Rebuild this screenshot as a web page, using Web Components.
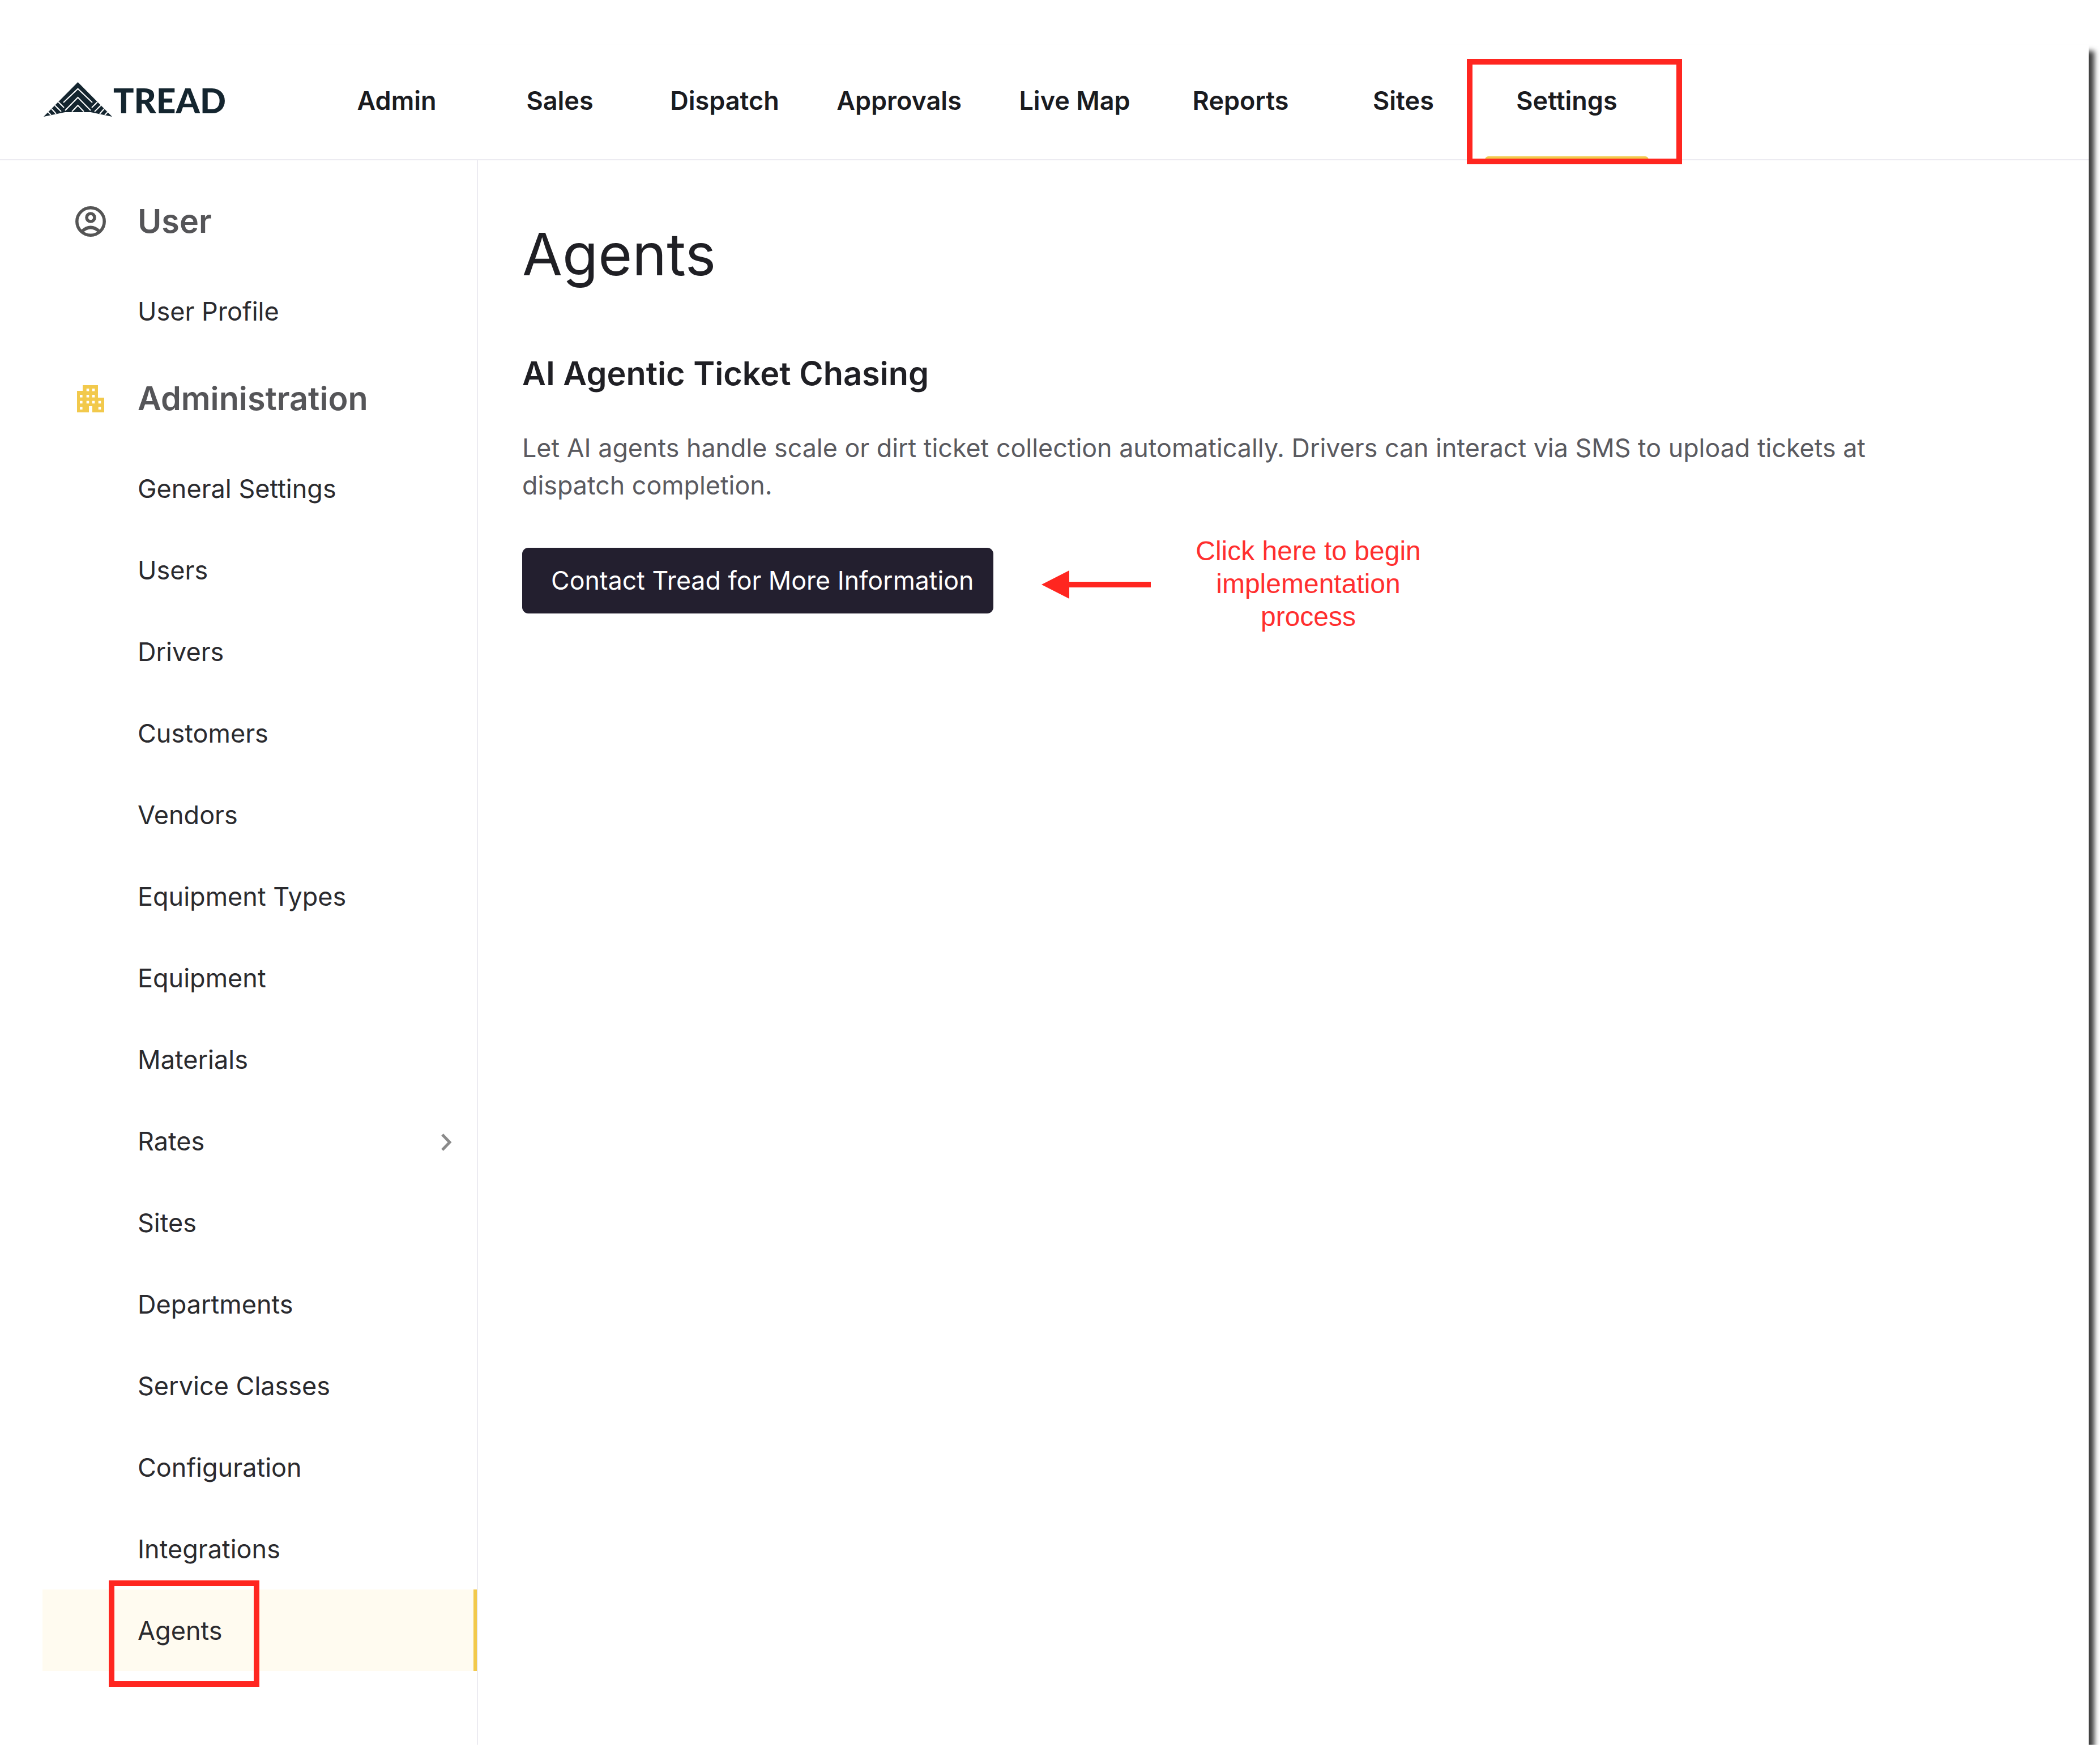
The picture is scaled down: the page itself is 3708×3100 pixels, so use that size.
<!DOCTYPE html>
<html lang="en">
  <head>
    <meta charset="UTF-8" />
    <title>Agents</title>
    <style>
      html, body { margin: 0; background: #fff; }
      body { font-family: Inter, "Liberation Sans", sans-serif; color: #1f1f24; }
    </style>
  </head>
  <body>
    <tread-frame>
      <top-nav>
        <tread-logo></tread-logo>
        <nav-tab w="289">Admin</nav-tab>
        <nav-tab w="287">Sales</nav-tab>
        <nav-tab w="295">Dispatch</nav-tab>
        <nav-tab w="321">Approvals</nav-tab>
        <nav-tab w="299">Live Map</nav-tab>
        <nav-tab w="287">Reports</nav-tab>
        <nav-tab w="288">Sites</nav-tab>
        <nav-tab w="289" active>Settings</nav-tab>
      </top-nav>
      <div style="display: flex; flex: 1; min-height: 0">
        <side-nav>
          <side-heading icon="user">User</side-heading>
          <side-item>User Profile</side-item>
          <side-heading icon="building">Administration</side-heading>
          <side-item>General Settings</side-item>
          <side-item>Users</side-item>
          <side-item>Drivers</side-item>
          <side-item>Customers</side-item>
          <side-item>Vendors</side-item>
          <side-item>Equipment Types</side-item>
          <side-item>Equipment</side-item>
          <side-item>Materials</side-item>
          <side-item more>Rates</side-item>
          <side-item>Sites</side-item>
          <side-item>Departments</side-item>
          <side-item>Service Classes</side-item>
          <side-item>Configuration</side-item>
          <side-item>Integrations</side-item>
          <side-item active>Agents</side-item>
        </side-nav>
        <agents-page></agents-page>
      </div>
      <red-box style="left: 2590px; top: 24px; width: 380px; height: 186px"></red-box>
      <red-box style="left: 192px; top: 2710px; width: 266px; height: 188px"></red-box>
    </tread-frame>
  </body>
  <script>
    // small helper, every element gets an open shadow root from a string
    function define(name, html, setup) {
      customElements.define(name, class extends HTMLElement {
        connectedCallback() {
          const root = this.attachShadow({ mode: "open" });
          root.innerHTML = html;
          if (setup) setup(this, root);
        }
      });
    }

    define("tread-frame", `
      <style>
        :host {
          display: flex;
          flex-direction: column;
          position: relative;
          box-sizing: border-box;
          width: 3688px;
          height: 3000px;
          margin-top: 80px;
          background: #fff;
          box-shadow: 10px 10px 9px #3c3c3c;
        }
      </style>
      <slot></slot>
    `);

    define("top-nav", `
      <style>
        :host {
          display: flex;
          align-items: stretch;
          box-sizing: border-box;
          height: 203px;
          border-bottom: 2px solid #ecebf1;
        }
      </style>
      <slot></slot>
    `);

    define("tread-logo", `
      <style>
        :host {
          display: flex;
          align-items: center;
          gap: 2px;
          box-sizing: border-box;
          width: 556px;
          padding: 0 0 6px 77px;
          color: #14252f;
        }
        svg { width: 121px; height: 61px; margin-top: -5px; }
        span { font: 900 60.500px/1 Lato, sans-serif; }
      </style>
      <svg viewBox="0 0 121 61">
        <polygon fill="#14252f" points="60.5,0 121,61 83,53 38,53 0,61" />
        <g fill="none" stroke="#fff" stroke-width="2">
          <path d="M35,36 L60.5,11.7 L86,36" />
          <path d="M38,50 L60.5,27 L83,50" />
          <path d="M50,52 L60.5,41 L71,52" />
          <path d="M26,35 L36,45 M20,41 L31,52 M14,47 L22,56 M8,53 L13,58" />
          <path d="M95,35 L85,45 M101,41 L90,52 M107,47 L99,56 M113,53 L108,58" />
        </g>
      </svg>
      <span>TREAD</span>
    `);

    define("nav-tab", `
      <style>
        :host {
          display: flex;
          align-items: center;
          justify-content: center;
          position: relative;
          box-sizing: border-box;
          padding-bottom: 6px;
          font: 600 45px/1 Inter, sans-serif;
          color: #1a1b1f;
        }
        :host([active]) i {
          position: absolute;
          left: 0;
          right: 0;
          bottom: -1px;
          height: 6px;
          background: #f2c94c;
          border-radius: 6px 6px 0 0;
        }
      </style>
      <slot></slot><i></i>
    `, (el) => { el.style.width = el.getAttribute("w") + "px"; });

    define("side-nav", `
      <style>
        :host {
          display: block;
          box-sizing: border-box;
          width: 844px;
          flex: none;
          padding: 25px 0 0 75px;
          border-right: 2px solid #ecebf1;
        }
      </style>
      <slot></slot>
    `);

    const ICONS = {
      user: `<svg viewBox="0 0 54 54" width="54" height="54" fill="none" stroke="#555" stroke-width="5.5">
        <circle cx="27" cy="27" r="24.2" />
        <circle cx="27" cy="20" r="7" />
        <path d="M11,45 Q27,30 43,45" />
      </svg>`,
      building: `<svg viewBox="0 0 48 48" width="48" height="48">
        <path fill="#f2c94c" d="M10,0 H37 V22 H48 V48 H27 V37 H21 V48 H0 V10 H10 Z" />
        <g fill="#fff">
          <rect x="16.7" y="6" width="4.6" height="4.6" /><rect x="26.7" y="6" width="4.6" height="4.6" />
          <rect x="5" y="17" width="4.6" height="4.6" /><rect x="16.7" y="17" width="4.6" height="4.6" /><rect x="26.7" y="17" width="4.6" height="4.6" />
          <rect x="5" y="27.7" width="4.6" height="4.6" /><rect x="16.7" y="27.7" width="4.6" height="4.6" /><rect x="26.7" y="27.7" width="4.6" height="4.6" /><rect x="37.7" y="27.7" width="4.6" height="4.6" />
          <rect x="5" y="38.4" width="4.6" height="4.6" /><rect x="37.7" y="38.4" width="4.6" height="4.6" />
        </g>
      </svg>`,
    };

    define("side-heading", `
      <style>
        :host {
          display: flex;
          align-items: center;
          box-sizing: border-box;
          height: 169px;
          padding-bottom: 4px;
          font: 600 57.500px/1 Inter, sans-serif;
          color: #555558;
        }
        .icon { display: flex; justify-content: center; width: 168px; box-sizing: border-box; padding-left: 2px; }
      </style>
      <span class="icon"></span><slot></slot>
    `, (el, root) => { root.querySelector(".icon").innerHTML = ICONS[el.getAttribute("icon")]; });

    define("side-item", `
      <style>
        :host {
          display: flex;
          align-items: center;
          justify-content: space-between;
          box-sizing: border-box;
          height: 144px;
          padding: 0 40px 0 168px;
          font: 400 45px/1 Inter, sans-serif;
          color: #2a2a2e;
        }
        :host([active]) {
          background: #fffbf0;
          box-shadow: inset -6px 0 0 #f2c94c;
        }
        svg { display: none; margin-top: 6px; }
        :host([more]) svg { display: block; }
      </style>
      <slot></slot>
      <svg width="26" height="36" viewBox="0 0 26 36" fill="none" stroke="#8a8a8a" stroke-width="5">
        <path d="M5,4 L18,17.500 L5,31" />
      </svg>
    `);

    define("agents-page", `
      <style>
        :host { display: block; flex: 1; padding: 0 0 0 78px; }
        h1 { margin: 0; padding-top: 100px; font: 400 103px/132px Inter, sans-serif; color: #1f1f24; }
        h2 { margin: 0; padding-top: 109px; font: 600 57.600px/70px Inter, sans-serif; color: #1f1f24; }
        p { margin: 0; padding-top: 64px; max-width: 2500px; font: 400 44.800px/66px Inter, sans-serif; color: #5a5a60; }
        .row { display: flex; align-items: center; margin-top: 42px; }
      </style>
      <h1>Agents</h1>
      <h2>AI Agentic Ticket Chasing</h2>
      <p>Let AI agents handle scale or dirt ticket collection automatically. Drivers can interact via SMS to upload tickets at dispatch completion.</p>
      <div class="row">
        <contact-button>Contact Tread for More Information</contact-button>
        <red-arrow></red-arrow>
        <call-out>Click here to begin implementation process</call-out>
      </div>
    `);

    define("contact-button", `
      <style>
        :host {
          display: flex;
          align-items: center;
          box-sizing: border-box;
          width: 832px;
          height: 116px;
          padding-left: 51px;
          background: #231f2f;
          border-radius: 11px;
          font: 400 44.700px/1 Inter, sans-serif;
          color: #fff;
        }
      </style>
      <slot></slot>
    `);

    define("red-arrow", `
      <style>
        :host { display: block; margin: 14px 0 0 85px; height: 50px; }
        svg { display: block; }
      </style>
      <svg width="193" height="50" viewBox="0 0 193 50">
        <polygon fill="#ff2620" points="0,25 49,0 49,20 193,20 193,30 49,30 49,50" />
      </svg>
    `);

    define("call-out", `
      <style>
        :host {
          display: block;
          box-sizing: border-box;
          width: 500px;
          margin: 12px 0 0 28px;
          text-align: center;
          font: 400 48px/58px "Liberation Sans", Arial, sans-serif;
          color: #ff2f2f;
        }
      </style>
      <slot></slot>
    `);

    define("red-box", `
      <style>
        :host {
          display: block;
          position: absolute;
          box-sizing: border-box;
          border: 10px solid #ff2620;
        }
      </style>
    `);
  </script>
</html>
